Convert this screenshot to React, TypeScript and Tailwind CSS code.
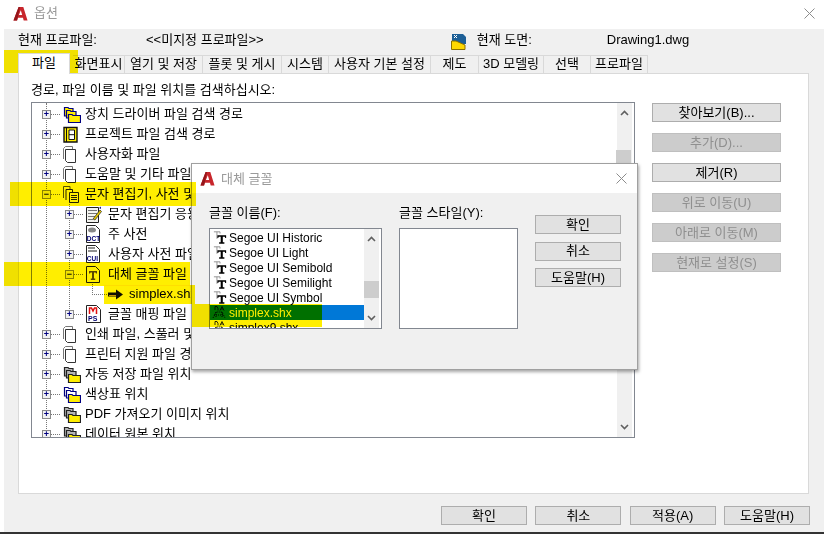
import type { ReactNode } from 'react';

const font = "font-['Liberation_Sans','Noto_Sans_CJK_KR',sans-serif]";

function Folders(props: { dark?: boolean; light?: boolean }) {
  const line = props.dark ? '#222' : '#000080';
  const back = props.dark ? '#b5b5b5' : props.light ? '#fff' : '#ffee00';
  return (
    <svg width="18" height="17" viewBox="0 0 18 17" className="shrink-0">
      <path d="M1.5 4V1.5H5L6 2.5H10V10H1.5Z" fill={back} stroke={line} strokeWidth="1.2" />
      <path d="M3.5 7V4.5H7L8 5.5H13V12H3.5Z" fill={back} stroke={line} strokeWidth="1.2" />
      <path d="M5.5 16.5V8.5H9L10 9.5H17.5V16.5Z" fill="#ffee00" stroke={line} strokeWidth="1.2" />
    </svg>
  );
}

function Pages() {
  return (
    <svg width="14" height="17" viewBox="0 0 14 17" className="shrink-0">
      <path d="M0.5 13V2.5L2.5 0.5H9.5V3" fill="#fff" stroke="#777" />
      <path d="M2.5 14.5V3.5H12.5V16.5H4.5Z" fill="#fff" stroke="#333" />
    </svg>
  );
}

function ProjectFile() {
  return (
    <svg width="15" height="17" viewBox="0 0 15 17" className="shrink-0">
      <path d="M1 1.5H14V16H1Z" fill="#ffee00" stroke="#111" strokeWidth="1.4" />
      <path d="M3.5 1.5V16" stroke="#111" />
      <path d="M6 4H11.5V13.5H6ZM6 8.7H11.5" fill="#fff" stroke="#111" />
    </svg>
  );
}

function PagesText() {
  return (
    <svg width="16" height="17" viewBox="0 0 16 17" className="shrink-0">
      <path d="M0.5 12V0.5H7V3" fill="#fff" stroke="#555" />
      <path d="M3 14V3.5H9.5V6" fill="#fff" stroke="#222" />
      <path d="M6.5 6.5H15.5V16.5H6.5Z" fill="#fff" stroke="#222" />
      <path d="M8 9.5H14M8 11.5H14M8 13.5H14" stroke="#222" />
    </svg>
  );
}

function Editor() {
  return (
    <svg width="16" height="17" viewBox="0 0 16 17" className="shrink-0">
      <path d="M0.5 1.5H12.5V16.5H0.5Z" fill="#f4f4f0" stroke="#222" />
      <path d="M2 4.5H11M2 7.5H11M2 10.5H9M2 13.5H7" stroke="#777" />
      <path d="M7 13L14 4L15.5 5.5L9 14Z" fill="#e8c900" stroke="#222" strokeWidth="0.7" />
      <path d="M13 2L15 0.5V3Z" fill="#1a1a8c" />
    </svg>
  );
}

function Dict(props: { label: string; top: ReactNode }) {
  return (
    <svg width="14" height="18" viewBox="0 0 14 18" className="shrink-0">
      <path d="M0.5 0.5H9.5L13.5 4.5V17.5H0.5Z" fill="#fff" stroke="#222" />
      {props.top}
      <text x="0.8" y="16" fontSize="6.5" fontWeight="700" fill="#000070" fontFamily="Liberation Sans">{props.label}</text>
    </svg>
  );
}

function FontFile() {
  return (
    <svg width="14" height="17" viewBox="0 0 14 17" className="shrink-0">
      <path d="M0.5 0.5H9.5L13.5 4.5V16.5H0.5Z" fill="#fff" stroke="#222" />
      <path d="M3 5H11V7.5H10L9.5 6.5H8V12.5H9.2V14H4.8V12.5H6V6.5H4.5L4 7.5H3Z" fill="#5a4a00" />
    </svg>
  );
}

function PsFile() {
  return (
    <svg width="15" height="18" viewBox="0 0 15 18" className="shrink-0">
      <path d="M0.5 0.5H10.5L14.5 4.5V17.5H0.5Z" fill="#fff" stroke="#222" />
      <path d="M3.5 9V3H5.5L7 6L8.5 3H10.5V9" fill="none" stroke="#e01010" strokeWidth="1.5" />
      <text x="2" y="16" fontSize="7" fontWeight="700" fill="#000070" fontFamily="Liberation Sans">PS</text>
    </svg>
  );
}

function Arrow() {
  return (
    <svg width="15" height="11" viewBox="0 0 15 11" className="shrink-0">
      <path d="M0 3.5H8V0.5L15 5.5L8 10.5V7.5H0Z" fill="#111" />
      <path d="M1 6.5H8" stroke="#c8a000" />
    </svg>
  );
}

function Logo() {
  return (
    <svg width="15" height="15" viewBox="0 0 16 16" className="shrink-0">
      <path fillRule="evenodd" d="M0.5 15.5L6 1H11L15.5 15.5H11.4L10.6 12.6H5.3L4.3 15.5ZM6.3 9.6H9.8L8.3 4.6Z" fill="#c8262c" />
      <path d="M0.5 15.5L6 1H7.5L4.3 15.5Z" fill="#94161b" />
    </svg>
  );
}

function TTIcon() {
  return (
    <svg width="14" height="15" viewBox="0 0 16 15" className="shrink-0">
      <path d="M1 1H8V3M4.5 1V9" fill="none" stroke="#888" />
      <path d="M5 5H15V8H14L13.5 6.5H11.2V13H13V14.5H7V13H8.8V6.5H6.5L6 8H5Z" fill="#000" />
    </svg>
  );
}

function ShxIcon() {
  return (
    <svg width="14" height="15" viewBox="0 0 14 15" className="shrink-0">
      <path d="M3 5V1.5H5L6 3.5V5.5M8 5.5L10 1.5L12 5.5M8.8 4H11.2" fill="none" stroke="#000" strokeWidth="0.8" />
      <path d="M1 13L4 7H10L13 13M2 10H12M4 7V13M10 7V13" fill="none" stroke="#000" strokeDasharray="1 1" />
    </svg>
  );
}

function ScrollArrow(props: { down?: boolean }) {
  return (
    <svg width="9" height="6" viewBox="0 0 9 6">
      <path d={props.down ? 'M1 1L4.5 4.5L8 1' : 'M1 5L4.5 1.5L8 5'} fill="none" stroke="#606060" strokeWidth="1.6" />
    </svg>
  );
}

function Btn(props: { label: string; disabled?: boolean; w?: string }) {
  return (
    <div className={`flex h-[19px] items-center justify-center border text-[13px] ${props.w ?? 'w-[86px]'} ${props.disabled ? 'border-[#bfbfbf] bg-[#cccccc] text-[#8f8f8f]' : 'border-[#adadad] bg-[#e1e1e1] text-black'}`}>
      {props.label}
    </div>
  );
}

function Tab(props: { label: string; w: string }) {
  return (
    <div className={`flex h-[18px] items-center justify-center border-t border-r border-[#d9d9d9] bg-[#f0f0f0] pb-[2px] text-[13px] leading-none ${props.w}`}>
      {props.label}
    </div>
  );
}

const rows: { level: number; open?: boolean; icon: ReactNode; label: string; leaf?: boolean }[] = [
  { level: 0, icon: <Folders />, label: '장치 드라이버 파일 검색 경로' },
  { level: 0, icon: <ProjectFile />, label: '프로젝트 파일 검색 경로' },
  { level: 0, icon: <Pages />, label: '사용자화 파일' },
  { level: 0, icon: <Pages />, label: '도움말 및 기타 파일 이름' },
  { level: 0, open: true, icon: <PagesText />, label: '문자 편집기, 사전 및 글꼴 파일 이름' },
  { level: 1, icon: <Editor />, label: '문자 편집기 응용프로그램' },
  { level: 1, icon: <Dict label="DCT" top={<ellipse cx="6" cy="5" rx="4" ry="2.5" fill="#888" />} />, label: '주 사전' },
  { level: 1, icon: <Dict label="CUI" top={<path d="M2 3H9M2 6H11" stroke="#222" />} />, label: '사용자 사전 파일' },
  { level: 1, open: true, icon: <FontFile />, label: '대체 글꼴 파일' },
  { level: 2, leaf: true, icon: <Arrow />, label: 'simplex.shx' },
  { level: 1, icon: <PsFile />, label: '글꼴 매핑 파일' },
  { level: 0, icon: <Pages />, label: '인쇄 파일, 스풀러 및 프롤로그' },
  { level: 0, icon: <Pages />, label: '프린터 지원 파일 경로' },
  { level: 0, icon: <Folders dark />, label: '자동 저장 파일 위치' },
  { level: 0, icon: <Folders light />, label: '색상표 위치' },
  { level: 0, icon: <Folders dark />, label: 'PDF 가져오기 이미지 위치' },
  { level: 0, icon: <Folders dark />, label: '데이터 원본 위치' },
];

function TreeRow(props: { row: (typeof rows)[number] }) {
  const { row } = props;
  const indent = row.level === 0 ? 'pl-[10px]' : row.level === 1 ? 'pl-[33px]' : 'pl-[60px]';
  return (
    <div className={`relative flex h-[20px] shrink-0 items-center whitespace-nowrap ${indent}`}>
      {row.leaf ? (
        <div className="mr-[1px] h-0 w-[15px] border-t border-dotted border-[#777]" />
      ) : (
        <>
          <div className="flex h-[9px] w-[9px] shrink-0 items-center justify-center border border-[#8a8a8a] bg-[#f1f1f1] text-[9px] leading-none font-bold text-[#000080]">
            {row.open ? '−' : '+'}
          </div>
          <div className="mr-[2px] h-0 w-[9px] border-t border-dotted border-[#777]" />
        </>
      )}
      <div className={`flex items-center ${row.leaf ? 'w-[18px]' : 'w-[20px] pl-[1px]'}`}>{row.icon}</div>
      <span className="ml-[3px] text-[13px] text-black">{row.label}</span>
    </div>
  );
}

export default function App() {
  return (
    <div className={`relative h-[534px] w-[824px] overflow-hidden bg-white text-black ${font}`}>
      {/* title bar */}
      <div className="flex h-[29px] items-center pb-[3px] pl-[13px]">
        <Logo />
        <span className="ml-[6px] text-[13px] text-[#9a9a9a]">옵션</span>
        <svg width="11" height="11" viewBox="0 0 11 11" className="mr-[9px] ml-auto">
          <path d="M0.5 0.5L10.5 10.5M10.5 0.5L0.5 10.5" stroke="#8c8c8c" />
        </svg>
      </div>

      {/* body */}
      <div className="ml-[4px] flex h-[503px] flex-col bg-[#f0f0f0]">
        <div className="flex h-[26px] items-center pb-[4px] text-[13px]">
          <span className="ml-[14px] w-[128px]">현재 프로파일:</span>
          <span>&lt;&lt;미지정 프로파일&gt;&gt;</span>
          <div className="mt-[3px] ml-[187px]">
            <svg width="16" height="17" viewBox="0 0 16 17">
              <path d="M1 1H12L15 4V11H1Z" fill="#1d5f96" />
              <path d="M3 2L6 5M6 2L3 5" stroke="#fff" />
              <path d="M0.5 16.5V8H5L14 12V16.5Z" fill="#ffd800" stroke="#8a7000" />
            </svg>
          </div>
          <span className="ml-[10px]">현재 도면:</span>
          <span className="ml-[75px]">Drawing1.dwg</span>
        </div>

        <div className="flex pl-[14px]">
          <div className="relative z-10 -mt-[2px] mr-[3px] -mb-[1px] flex h-[21px] w-[52px] items-center justify-center border-x border-t border-[#d9d9d9] bg-white pb-[3px] text-[13px] leading-none">파일</div>
          <Tab label="화면표시" w="w-[52px]" />
          <Tab label="열기 및 저장" w="w-[78px]" />
          <Tab label="플롯 및 게시" w="w-[79px]" />
          <Tab label="시스템" w="w-[47px]" />
          <Tab label="사용자 기본 설정" w="w-[102px]" />
          <Tab label="제도" w="w-[48px]" />
          <Tab label="3D 모델링" w="w-[65px]" />
          <Tab label="선택" w="w-[47px]" />
          <Tab label="프로파일" w="w-[57px]" />
        </div>

        <div className="ml-[14px] flex h-[421px] w-[791px] gap-[17px] border border-[#d9d9d9] bg-white pt-[8px] pl-[12px]">
          <div className="flex flex-col">
            <div className="h-[20px] text-[13px] leading-[16px]">경로, 파일 이름 및 파일 위치를 검색하십시오:</div>
            <div className="flex h-[336px] w-[604px] border border-[#828790] bg-white">
              <div className="relative flex min-w-0 flex-1 flex-col overflow-hidden pt-[1px]">
                {/* dotted guide lines of the tree */}
                <div className="absolute top-0 bottom-0 left-[14px] border-l border-dotted border-[#777]" />
                <div className="absolute top-[91px] left-[37px] h-[121px] border-l border-dotted border-[#777]" />
                <div className="absolute top-[171px] left-[60px] h-[21px] border-l border-dotted border-[#777]" />
                {rows.map((r) => (
                  <TreeRow key={r.label} row={r} />
                ))}
              </div>
              <div className="mr-[2px] flex w-[15px] flex-col items-center justify-between bg-[#f0f0f0] py-[7px]">
                <ScrollArrow />
                <ScrollArrow down />
              </div>
            </div>
          </div>
          <div className="flex flex-col gap-[11px] pt-[21px]">
            <Btn label="찾아보기(B)..." w="w-[129px]" />
            <Btn label="추가(D)..." w="w-[129px]" disabled />
            <Btn label="제거(R)" w="w-[129px]" />
            <Btn label="위로 이동(U)" w="w-[129px]" disabled />
            <Btn label="아래로 이동(M)" w="w-[129px]" disabled />
            <Btn label="현재로 설정(S)" w="w-[129px]" disabled />
          </div>
        </div>

        <div className="mt-[12px] flex justify-end gap-[8.34px] pr-[14px]">
          <Btn label="확인" />
          <Btn label="취소" />
          <Btn label="적용(A)" />
          <Btn label="도움말(H)" />
        </div>
      </div>
      <div className="absolute right-0 bottom-0 left-0 h-[2px] bg-[#333333]" />

      {/* scrollbar thumb behind the dialog */}
      <div className="absolute top-[150px] left-[616px] h-[24px] w-[15px] bg-[#cdcdcd]" />

      {/* yellow marker over the first tab */}
      <div className="absolute top-[50px] left-[4px] h-[23px] w-[74px] bg-[#ffee00] mix-blend-multiply" />

      {/* font dialog */}
      <div className="absolute top-[163px] left-[191px] h-[207px] w-[447px] border border-[#a0a0a0] bg-[#f0f0f0] shadow-[1px_2px_3px_rgba(0,0,0,0.35)]">
        <div className="flex h-[29px] items-center bg-white pl-[8px]">
          <Logo />
          <span className="ml-[6px] text-[13px] text-[#9a9a9a]">대체 글꼴</span>
          <svg width="11" height="11" viewBox="0 0 11 11" className="mr-[10px] ml-auto">
            <path d="M0.5 0.5L10.5 10.5M10.5 0.5L0.5 10.5" stroke="#8c8c8c" />
          </svg>
        </div>
        <div className="flex pt-[12px] pl-[17px]">
          <div className="w-[173px]">
            <div className="h-[20px] text-[13px] leading-[16px]">글꼴 이름(F):</div>
            <div className="mt-[3px] flex h-[101px] w-[173px] border border-[#828790] bg-white">
              <div className="flex min-w-0 flex-1 flex-col overflow-hidden pt-[1px]">
                {['Segoe UI Historic', 'Segoe UI Light', 'Segoe UI Semibold', 'Segoe UI Semilight', 'Segoe UI Symbol'].map((f) => (
                  <div key={f} className="flex h-[15px] shrink-0 items-center pl-[3px] text-[12px] text-black">
                    <TTIcon />
                    <span className="ml-[2px] whitespace-nowrap">{f}</span>
                  </div>
                ))}
                <div className="flex h-[15px] shrink-0 items-center bg-[#0078d7] pl-[2px] text-[12px] text-white">
                  <ShxIcon />
                  <span className="ml-[3px]">simplex.shx</span>
                </div>
                <div className="flex h-[15px] shrink-0 items-center pl-[2px] text-[12px]">
                  <ShxIcon />
                  <span className="ml-[3px]">simplex9.shx</span>
                </div>
              </div>
              <div className="relative mr-[2px] flex w-[15px] flex-col items-center justify-between bg-[#f0f0f0] py-[7px]">
                <ScrollArrow />
                <div className="absolute top-[52px] left-0 h-[17px] w-[15px] bg-[#cdcdcd]" />
                <ScrollArrow down />
              </div>
            </div>
          </div>
          <div className="ml-[17px] w-[120px]">
            <div className="h-[20px] text-[13px] leading-[16px]">글꼴 스타일(Y):</div>
            <div className="mt-[3px] h-[101px] w-[119px] border border-[#828790] bg-white" />
          </div>
          <div className="ml-[16px] flex flex-col gap-[7.5px] pt-[10px]">
            <Btn label="확인" />
            <Btn label="취소" />
            <Btn label="도움말(H)" />
          </div>
        </div>
      </div>

      {/* yellow marker strokes, they run over the dialog edge */}
      <div className="absolute top-[182px] left-[10px] h-[24px] w-[186px] bg-[#ffee00] mix-blend-multiply" />
      <div className="absolute top-[262px] left-[4px] h-[24px] w-[186px] bg-[#ffee00] mix-blend-multiply" />
      <div className="absolute top-[285px] left-[104px] h-[19px] w-[91px] bg-[#ffee00] mix-blend-multiply" />
      <div className="absolute top-[304px] left-[192px] h-[23px] w-[130px] bg-[#ffee00] mix-blend-multiply" />
    </div>
  );
}
